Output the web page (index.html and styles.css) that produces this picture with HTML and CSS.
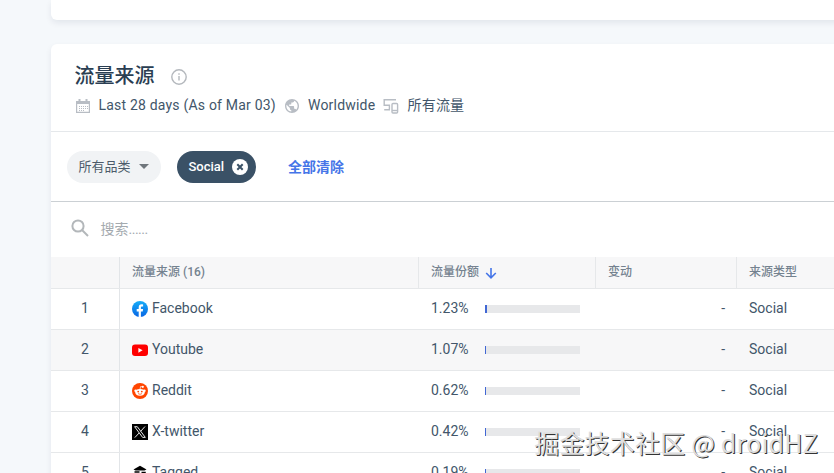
FILE: index.html
```html
<!DOCTYPE html>
<html lang="zh-CN">
<head>
<meta charset="utf-8">
<title>流量来源</title>
<link rel="stylesheet" href="styles.css">
</head>
<body>
<main class="page">
  <section class="card card-prev"></section>
  <section class="card">
    <header class="head">
      <div class="title-row">
        <h1>流量来源</h1>
        <svg class="info" viewBox="0 0 16 16"><circle cx="8" cy="8" r="7.2"/><path d="M8 7v4.500M8 4.300v1.400"/></svg>
      </div>
      <div class="meta">
        <svg class="i-cal" viewBox="0 0 14 14"><path class="frame" d="M.6 2.600h12.800v10.800H.6z"/><path class="fill" d="M0 2h14v3H0zM2.500 0h2v2.500h-2zM9.500 0h2v2.500h-2z"/><path class="dots" d="M3 7.500h9M3 9.500h9M3 11.500h5"/></svg>
        <span class="m-date">Last 28 days (As of Mar 03)</span>
        <svg class="i-globe" viewBox="2 2 20 20"><path d="M12 2C6.480 2 2 6.480 2 12s4.480 10 10 10 10-4.480 10-10S17.520 2 12 2zm-1 17.930c-3.950-.49-7-3.850-7-7.930 0-.62.08-1.210.21-1.790L9 15v1c0 1.100.9 2 2 2v1.930zm6.900-2.540c-.26-.81-1-1.390-1.900-1.390h-1v-3c0-.55-.45-1-1-1H8v-2h2c.55 0 1-.45 1-1V7h2c1.100 0 2-.9 2-2v-.41c2.930 1.190 5 4.060 5 7.410 0 2.080-.8 3.970-2.100 5.390z"/></svg>
        <span class="m-world">Worldwide</span>
        <svg class="i-dev" viewBox="0 0 16 16"><path d="M13 1.700H1.200v5.500h5.200v4.600M1.200 11.800h5.800"/><rect x="9" y="5.500" width="5.600" height="9.500" rx="1"/><path d="M9 12.500h5"/></svg>
        <span>所有流量</span>
      </div>
    </header>
    <div class="filters">
      <button class="chip">所有品类<i class="caret"></i></button>
      <button class="chip chip-on">Social<svg viewBox="0 0 16 16"><circle cx="8" cy="8" r="8"/><path d="M5.300 5.300l5.400 5.400M10.700 5.300l-5.400 5.400"/></svg></button>
      <a class="clear">全部清除</a>
    </div>
    <div class="search">
      <svg viewBox="0 0 18 18"><circle cx="7" cy="7" r="5.600"/><path d="M11 11l6 6"/></svg>
      <span>搜索<span class="dots">......</span></span>
    </div>
    <div class="row thead">
      <div class="c-num"></div>
      <div class="c-src">流量来源 (16)</div>
      <div class="c-share">流量份额<svg class="sort" viewBox="0 0 12 12"><path d="M6 1v9.500M1.200 6L6 10.800 10.800 6"/></svg></div>
      <div class="c-chg">变动</div>
      <div class="c-type">来源类型</div>
    </div>
    <div class="row">
      <div class="c-num">1</div>
      <div class="c-src"><svg class="logo" viewBox="0 0 16 16"><defs><linearGradient id="fb" x2="0" y2="1"><stop stop-color="#17adf8"/><stop offset="1" stop-color="#0866e4"/></linearGradient></defs><circle cx="8" cy="8" r="8" fill="url(#fb)"/><path fill="#fff" d="M6.700 16v-5.600h-2V8h2V6.600c0-2.200 1-3.300 3-3.300.5 0 .9 0 1.400.2v2h-1c-.9 0-1.200.4-1.200 1.200V8h2.200l-.4 2.400H8.900V16z"/></svg>Facebook</div>
      <div class="c-share"><span class="pct">1.23%</span><span class="bar"><i style="width:2px"></i></span></div>
      <div class="c-chg">-</div>
      <div class="c-type">Social</div>
    </div>
    <div class="row alt">
      <div class="c-num">2</div>
      <div class="c-src"><svg class="logo" viewBox="0 0 16 16"><rect y="2.500" width="16" height="11.500" rx="3" fill="#f00"/><path fill="#fff" d="M6.400 5.900v4.800l4.200-2.400z"/></svg>Youtube</div>
      <div class="c-share"><span class="pct">1.07%</span><span class="bar"><i style="width:1px"></i></span></div>
      <div class="c-chg">-</div>
      <div class="c-type">Social</div>
    </div>
    <div class="row">
      <div class="c-num">3</div>
      <div class="c-src"><svg class="logo" viewBox="0 0 16 16"><circle cx="8" cy="8" r="8" fill="#ff4500"/><g fill="#fff"><ellipse cx="8" cy="9.300" rx="4.700" ry="3.400"/><circle cx="3.600" cy="7.700" r="1.300"/><circle cx="12.400" cy="7.700" r="1.300"/><circle cx="10.800" cy="3.800" r="1.100"/></g><path d="M8 6.200l.6-2.700 2.200.4" stroke="#fff" stroke-width=".7" fill="none"/><g fill="#ff4500"><circle cx="6.200" cy="8.600" r=".9"/><circle cx="9.800" cy="8.600" r=".9"/></g><path d="M6 10.600q2 1.400 4 0" stroke="#ff4500" stroke-width=".7" fill="none"/></svg>Reddit</div>
      <div class="c-share"><span class="pct">0.62%</span><span class="bar"><i style="width:1px"></i></span></div>
      <div class="c-chg">-</div>
      <div class="c-type">Social</div>
    </div>
    <div class="row">
      <div class="c-num">4</div>
      <div class="c-src"><svg class="logo" viewBox="0 0 16 16"><path d="M0 0h16v16H0z"/><path d="M2.600 2.700h2.700l8 10.700h-2.700zM13 2.500L8.700 7.300M7.200 8.900l-4.400 4.700" fill="none" stroke="#fff" stroke-width=".9"/></svg>X-twitter</div>
      <div class="c-share"><span class="pct">0.42%</span><span class="bar"><i style="width:1px"></i></span></div>
      <div class="c-chg">-</div>
      <div class="c-type">Social</div>
    </div>
    <div class="row">
      <div class="c-num">5</div>
      <div class="c-src"><svg class="logo" viewBox="0 0 16 16"><path d="M1.500 4.500l3-1.800L8 .8l3.500 1.900 3 1.800-2 1h-9z"/><path d="M2.500 7h5M9.500 7.500h3.500v4L8 15l-4-3" fill="none" stroke="#000" stroke-width="1.500"/></svg>Tagged</div>
      <div class="c-share"><span class="pct">0.19%</span><span class="bar"><i style="width:1px"></i></span></div>
      <div class="c-chg">-</div>
      <div class="c-type">Social</div>
    </div>
  </section>
</main>
<div class="watermark">掘金技术社区 @ droidHZ</div>
</body>
</html>
```

FILE: styles.css
```css
* { box-sizing: border-box; }
body {
  margin: 0;
  height: 473px;
  overflow: hidden;
  background: #f5f8fb;
  color: #42566a;
  font: 14px/20px Roboto, "Noto Sans CJK SC", sans-serif;
}
svg { flex: none; display: block; }
.page {
  height: 473px;
  overflow: hidden;
  padding-left: 51px;
  display: flex;
  flex-direction: column;
  gap: 24px;
}
.card {
  flex: none;
  width: 900px;
  background: #fff;
  border-radius: 6px;
  box-shadow: 0 3px 6px rgba(14, 30, 62, .08);
}
.card-prev { height: 20px; border-radius: 0 0 6px 6px; }
.head { height: 88px; padding: 18px 24px 0; border-bottom: 1px solid #e5e8eb; }
.title-row { display: flex; align-items: center; height: 28px; gap: 16px; }
h1 { margin: 0 0 0 -.5px; font-size: 20px; line-height: 28px; font-weight: 500; color: #2a3e52; }
.info { width: 16px; height: 16px; margin-top: 2px; fill: none; stroke: #b4b8bd; stroke-width: 1.4; }
.meta { display: flex; align-items: center; height: 20px; margin-top: 5px; letter-spacing: .2px; }
.meta svg { fill: #b8bdc4; margin-top: 1px; }
.meta .i-cal { width: 14px; height: 14px; margin: 1px 8.5px 0 1px; }
.i-cal .frame { fill: none; stroke: #b8bdc4; stroke-width: 1.2; }
.i-cal .dots { fill: none; stroke: #b8bdc4; stroke-width: 1; stroke-dasharray: 1 1; }
.m-date { width: 186.5px; white-space: nowrap; }
.i-globe { width: 14px; height: 14px; margin-right: 9px; }
.m-world { width: 75px; }
.meta .i-dev { width: 16px; height: 16px; margin-right: 8.5px; fill: none; stroke: #b8bdc4; stroke-width: 1.4; }
.filters { display: flex; align-items: center; height: 70px; padding-left: 16px; border-bottom: 1px solid #cbd0d4; }
.chip {
  display: flex;
  align-items: center;
  width: 94px;
  height: 32px;
  padding: 0 0 0 11.5px;
  border: 0;
  border-radius: 16px;
  background: #f1f3f5;
  color: #4c5b6a;
  font: 13px/20px Roboto, "Noto Sans CJK SC", sans-serif;
}
.caret { margin-left: 8.5px; border: 5px solid transparent; border-top-color: #70767c; border-bottom: 0; }
.chip-on { width: 79px; margin: 0 32px 0 16px; background: #3a5166; color: #fff; font-weight: 500; justify-content: space-between; padding-right: 8px; }
.chip-on svg { width: 16px; height: 16px; fill: #fff; }
.chip-on path { stroke: #3a5166; stroke-width: 2; }
.clear { color: #4575e8; font-weight: 700; }
.search { display: flex; align-items: center; height: 55px; padding: 0 0 2px 19.5px; gap: 12px; color: #a4aaaf; }
.search svg { width: 18px; height: 18px; margin-top: -1px; fill: none; stroke: #b3b7ba; stroke-width: 2; }
.search .dots { letter-spacing: -.5px; }
.row { display: flex; height: 41px; border-bottom: 1px solid #e6e8ea; }
.row > div { display: flex; align-items: center; flex: none; padding-left: 12px; padding-bottom: 2px; }
.row > .c-num { width: 69px; padding-left: 0; justify-content: center; border-right: 1px solid #e2e5e8; }
.c-src { width: 299px; }
.c-share { width: 177px; }
.row > .c-chg { width: 141px; padding-right: 12px; justify-content: flex-end; }
.thead { height: 32px; background: #f7f7f8; color: #74828f; font-size: 12px; font-weight: 500; }
.thead > div { border-right: 1px solid #e6e8ea; }
.thead > .c-chg { justify-content: flex-start; }
.thead > .c-type { border: 0; }
.sort { width: 12px; height: 12px; margin: 3px 0 0 6px; fill: none; stroke: #4575e8; stroke-width: 1.6; }
.alt { background: #f7f7f8; }
.logo { width: 16px; height: 16px; margin: 2px 4px 0 0; }
.pct { width: 54px; }
.bar { width: 95px; height: 8px; margin-top: 1px; background: #e7e8ea; }
.bar i { display: block; height: 8px; background: #4167d4; }
.watermark {
  position: absolute;
  right: 16px;
  bottom: 13px;
  color: #dedede;
  font: 25px/36px "Noto Sans CJK SC", sans-serif;
  letter-spacing: .2px;
  white-space: nowrap;
  text-shadow: 1px 1px 0 #333;
}
```
